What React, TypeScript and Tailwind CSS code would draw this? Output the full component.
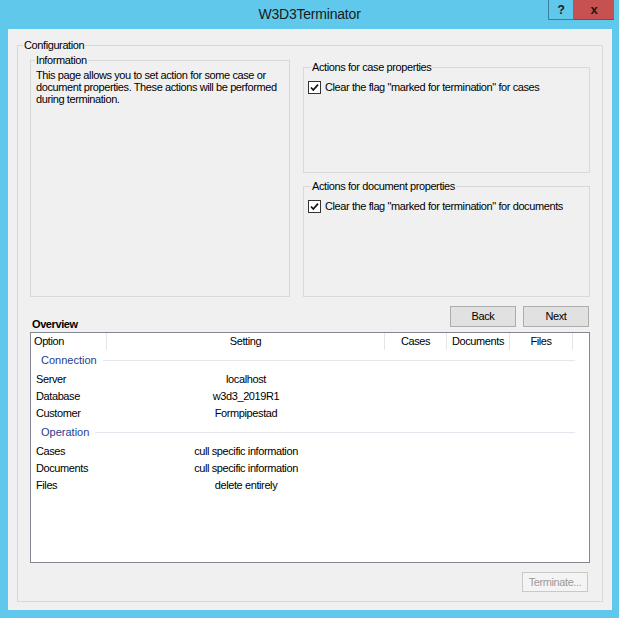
import type { ReactNode } from 'react';

const ROWS: { group: string; items: [string, string][] }[] = [
  {
    group: 'Connection',
    items: [
      ['Server', 'localhost'],
      ['Database', 'w3d3_2019R1'],
      ['Customer', 'Formpipestad'],
    ],
  },
  {
    group: 'Operation',
    items: [
      ['Cases', 'cull specific information'],
      ['Documents', 'cull specific information'],
      ['Files', 'delete entirely'],
    ],
  },
];

function CheckBox() {
  return (
    <svg width="13" height="13" viewBox="0 0 13 13" className="shrink-0">
      <rect x="0.5" y="0.5" width="12" height="12" fill="#fff" stroke="#333" />
      <path d="M3 6.5 L5.3 9 L10 3.6" fill="none" stroke="#111" strokeWidth="1.7" />
    </svg>
  );
}

function GroupBox({
  label,
  offset,
  className,
  children,
}: {
  label: string;
  offset: string;
  className?: string;
  children?: ReactNode;
}) {
  return (
    <fieldset className={`border border-[#d9d9d9] ${className ?? ''}`}>
      <legend className={`${offset} px-[1px] leading-[13px]`}>{label}</legend>
      {children}
    </fieldset>
  );
}

function WinButton({ children, disabled }: { children: ReactNode; disabled?: boolean }) {
  return (
    <button
      type="button"
      disabled={disabled}
      className={
        disabled
          ? 'h-[20px] w-[66px] border border-[#c8c8c8] bg-[#f4f4f4] text-[#9a9a9a]'
          : 'h-[21px] w-[66px] border border-[#adadad] bg-[#e1e1e1] text-black'
      }
    >
      {children}
    </button>
  );
}

export default function App() {
  return (
    <div className="flex h-[618px] w-[619px] flex-col bg-[#60c8ea] font-['Liberation_Sans',Arial,sans-serif] text-[11px] tracking-[-0.4px] text-black">
      {/* title bar */}
      <div className="grid h-[29px] shrink-0 grid-cols-[1fr_auto_1fr]">
        <div />
        <div className="pt-[5px] text-[14px] leading-[18px] tracking-[-0.2px] text-[#1a1a1a]">
          W3D3Terminator
        </div>
        <div className="flex justify-end pr-[5px]">
          <div className="flex h-[20px] w-[26px] items-center justify-center border border-t-0 border-[#3f7ea3] text-[12px] font-bold text-[#1a1a1a]">
            ?
          </div>
          <div className="flex h-[20px] w-[40px] items-center justify-center border-b border-[#9e3b3b] bg-[#c75050] text-[13px] font-bold text-[#1a1a1a]">
            x
          </div>
        </div>
      </div>

      {/* client area */}
      <div className="ml-[8px] mr-[7px] h-[581px] bg-[#f0f0f0] pt-[10px]">
        <GroupBox label="Configuration" offset="ml-[5px]" className="mx-[9px]">
          <div className="px-[12px] pt-[2px] pb-[9px]">
            <div className="flex gap-[13px]">
              <GroupBox label="Information" offset="ml-[4px]" className="h-[243px] w-[260px]">
                <p className="pl-[5px] pt-[2px] leading-[12px]">
                  This page allows you to set action for some case or
                  <br />
                  document properties. These actions will be performed
                  <br />
                  during termination.
                </p>
              </GroupBox>
              <div className="flex w-[287px] flex-col pt-[7px]">
                <GroupBox label="Actions for case properties" offset="ml-[7px]" className="h-[112px]">
                  <label className="flex items-center gap-[4px] pl-[4px] pt-[6px] leading-[14px]">
                    <CheckBox />
                    Clear the flag "marked for termination" for cases
                  </label>
                </GroupBox>
                <GroupBox label="Actions for document properties" offset="ml-[7px]" className="mt-[7px] h-[117px]">
                  <label className="flex items-center gap-[4px] pl-[4px] pt-[6px] leading-[14px]">
                    <CheckBox />
                    Clear the flag "marked for termination" for documents
                  </label>
                </GroupBox>
              </div>
            </div>

            <div className="mt-[9px] flex items-end justify-between">
              <span className="pl-[2px] font-bold leading-[13px]">Overview</span>
              <div className="mb-[4px] mr-[1px] flex gap-[7px]">
                <WinButton>Back</WinButton>
                <WinButton>Next</WinButton>
              </div>
            </div>

            {/* overview list */}
            <div className="mt-[1px] h-[231px] border border-[#828790] bg-white">
              <div className="flex h-[17px] leading-[17px]">
                <div className="w-[76px] border-r border-[#e5e5e5] pl-[3px]">Option</div>
                <div className="w-[278px] border-r border-[#e5e5e5] text-center">Setting</div>
                <div className="w-[62px] border-r border-[#e5e5e5] text-center">Cases</div>
                <div className="w-[63px] border-r border-[#e5e5e5] text-center">Documents</div>
                <div className="w-[63px] border-r border-[#e5e5e5] text-center">Files</div>
              </div>
              {ROWS.map((g) => (
                <div key={g.group}>
                  <div className="flex h-[21px] items-center pl-[10px] pr-[14px]">
                    <span className="text-[#1e3d8f] tracking-normal">{g.group}</span>
                    <div className="ml-[6px] h-px flex-1 bg-[#e3e8ee]" />
                  </div>
                  {g.items.map(([opt, val]) => (
                    <div key={opt} className="flex h-[17px] items-center">
                      <div className="w-[76px] pl-[5px]">{opt}</div>
                      <div className="w-[278px] text-center">{val}</div>
                    </div>
                  ))}
                </div>
              ))}
            </div>

            <div className="mt-[9px] flex justify-end pr-[2px]">
              <WinButton disabled>Terminate...</WinButton>
            </div>
          </div>
        </GroupBox>
      </div>
    </div>
  );
}
